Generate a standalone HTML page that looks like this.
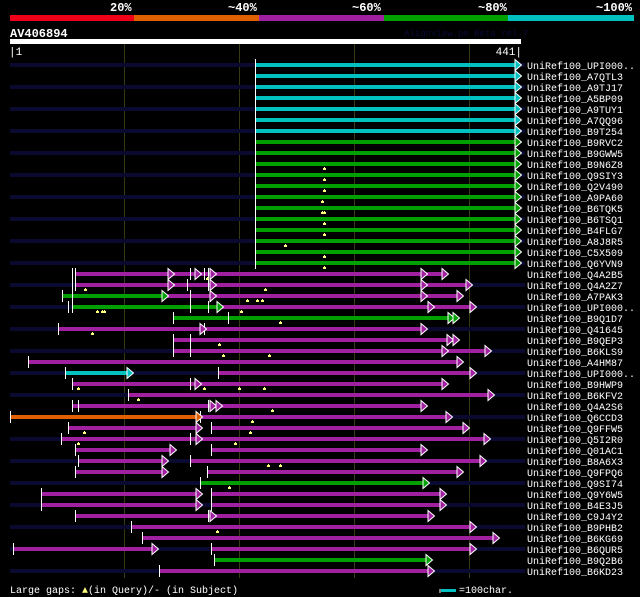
<!DOCTYPE html>
<html><head><meta charset="utf-8"><style>
html,body{margin:0;padding:0;background:#000;width:640px;height:597px;overflow:hidden}
svg{display:block}
text{font-family:"Liberation Mono","DejaVu Sans Mono",monospace}
</style></head><body>
<svg id="s" width="640" height="597" xmlns="http://www.w3.org/2000/svg">
<rect width="640" height="597" fill="#000"/>
<g font-size="12" font-weight="bold" fill="#fff">
<text x="110" y="11">20%</text><text x="228" y="11">~40%</text><text x="352" y="11">~60%</text><text x="478" y="11">~80%</text><text x="596" y="11">~100%</text>
</g>
<rect x="10" y="15" width="125" height="6" fill="#f00018"/>
<rect x="134" y="15" width="125" height="6" fill="#e06000"/>
<rect x="259" y="15" width="125" height="6" fill="#a020a0"/>
<rect x="384" y="15" width="125" height="6" fill="#00a000"/>
<rect x="508" y="15" width="126" height="6" fill="#00c0c0"/>
<text x="10" y="37" font-size="12" font-weight="bold" fill="#fff">AV406894</text>
<text x="404" y="36" font-size="9" fill="#0a0a38">AlignView.pm Beta rel.7</text>
<rect x="10" y="39" width="511" height="5" fill="#fff"/>
<text x="9" y="55" font-size="11" fill="#fff">|1</text>
<text x="522" y="55" font-size="11" fill="#fff" text-anchor="end">441|</text>
<g id="grid" stroke="#3a3a10" stroke-width="1"></g>
<g id="rows"></g>
<text x="10" y="593" font-size="10" fill="#fff">Large gaps: <tspan fill="#ffff80">▲</tspan>(in Query)/- (in Subject)</text>
<line x1="440" y1="589" x2="440" y2="593" stroke="#fff"/>
<rect x="441" y="589" width="15" height="3" fill="#00c0c0"/>
<text x="459" y="593" font-size="10" fill="#fff">=100char.</text>
</svg>
<script>
var NS="http://www.w3.org/2000/svg";
function el(p,t,a){var e=document.createElementNS(NS,t);for(var k in a)e.setAttribute(k,a[k]);p.appendChild(e);return e;}
var g=document.getElementById('grid');
[124,239,354,469].forEach(function(x){el(g,'line',{x1:x+.5,y1:44,x2:x+.5,y2:578});});
var C={c:"#00c0c0",g:"#00a000",m:"#a020a0",o:"#e06000"};
var labels=["UPI000..","A7QTL3","A9TJ17","A5BP09","A9TUY1","A7QQ96","B9T254","B9RVC2","B9GWW5","B9N6Z8","Q9SIY3","Q2V490","A9PA60","B6TQK5","B6TSQ1","B4FLG7","A8J8R5","C5X509","Q6YVN9","Q4A2B5","Q4A2Z7","A7PAK3","UPI000..","B9Q1D7","Q41645","B9QEP3","B6KLS9","A4HM87","UPI000..","B9HWP9","B6KFV2","Q4A2S6","Q6CCD3","Q9FFW5","Q5I2R0","Q01AC1","B8A6X3","Q9FPQ6","Q9SI74","Q9Y6W5","B4E3J5","C9J4Y2","B9PHB2","B6KG69","B6QUR5","B9Q2B6","B6KD23"];
var R=[];
for(var i=0;i<7;i++)R.push({s:[["c",255,515,[515]]],m:[],t:[255]});
for(var i=7;i<19;i++)R.push({s:[["g",255,515,[515]]],m:[],t:[255]});
[9,10,11,12,13,14,15,17,18].forEach(function(i){R[i].m=[324];});R[16].m=[285];R[12].m=[322];R[13].m=[322,324];
R.push({s:[["m",75,442,[168,195,210,421,442]]],m:[207],t:[72,75,190,204,208]});
R.push({s:[["m",75,466,[168,210,421,466]]],m:[85,265],t:[72,75,187,208]});
R.push({s:[["g",62,162,[162]],["m",162,457,[210,421,457]]],m:[247,257,262],t:[62,72,190,210]});
R.push({s:[["g",72,217,[217]],["m",217,470,[428,470]]],m:[97,102,104,241],t:[68,72,190,208]});
R.push({s:[["g",173,453,[448,453]]],m:[280],t:[173,228]});
R.push({s:[["m",58,421,[200,421]]],m:[92],t:[58,204]});
R.push({s:[["m",173,453,[447,453]]],m:[219],t:[173,190]});
R.push({s:[["m",173,485,[442,485]]],m:[223,269],t:[173,190]});
R.push({s:[["m",28,457,[457]]],m:[],t:[28]});
R.push({s:[["c",65,127,[127]],["m",218,470,[470]]],m:[],t:[65,218]});
R.push({s:[["m",72,442,[195,442]]],m:[78,204,239,264],t:[72,190]});
R.push({s:[["m",128,488,[488]]],m:[138],t:[128]});
R.push({s:[["m",72,421,[210,216,421]]],m:[272],t:[72,78,208]});
R.push({s:[["o",10,196,[196]],["m",200,446,[446]]],m:[252],t:[10,200]});
R.push({s:[["m",68,196,[196]],["m",211,463,[463]]],m:[84,250],t:[68,211]});
R.push({s:[["m",61,196,[196]],["m",196,484,[484]]],m:[78,235],t:[61,190]});
R.push({s:[["m",75,170,[170]],["m",211,421,[421]]],m:[],t:[75,211]});
R.push({s:[["m",78,162,[162]],["m",190,480,[480]]],m:[268,280],t:[78,190]});
R.push({s:[["m",75,162,[162]],["m",207,457,[457]]],m:[],t:[75,207]});
R.push({s:[["g",200,423,[423]]],m:[229],t:[200]});
R.push({s:[["m",41,196,[196]],["m",211,440,[440]]],m:[],t:[41,211]});
R.push({s:[["m",41,196,[196]],["m",211,440,[440]]],m:[],t:[41,211]});
R.push({s:[["m",75,210,[210]],["m",210,428,[428]]],m:[],t:[75,208]});
R.push({s:[["m",131,470,[470]]],m:[217],t:[131]});
R.push({s:[["m",142,493,[493]]],m:[],t:[142]});
R.push({s:[["m",13,152,[152]],["m",211,470,[470]]],m:[],t:[13,211]});
R.push({s:[["g",214,426,[426]]],m:[],t:[214]});
R.push({s:[["m",159,428,[428]]],m:[],t:[159]});
var rg=document.getElementById('rows');
R.forEach(function(r,i){
  var y=65+i*11;
  if(i%2==0) el(rg,'rect',{x:10,y:y-2,width:515,height:4,fill:"#0a0a30"});
  r.s.forEach(function(s){el(rg,'rect',{x:s[1],y:y-2,width:s[2]-s[1],height:4,fill:C[s[0]]});});
  r.t.forEach(function(x){el(rg,'rect',{x:x,y:y-6,width:1,height:12,fill:"#fff"});});
  r.s.forEach(function(s){s[3].forEach(function(x){
    el(rg,'polygon',{points:(x)+","+(y-5.5)+" "+(x+6.5)+","+y+" "+(x)+","+(y+5.5),fill:C[s[0]],stroke:"#fff","stroke-width":1});
  });});
  r.m.forEach(function(x){el(rg,'rect',{x:x-1,y:y+4,width:3,height:2,fill:"#ffff80"});el(rg,'rect',{x:x,y:y+3,width:1,height:1,fill:"#ffff80"});});
  var t=el(rg,'text',{x:527,y:y+4,"font-size":"10",fill:"#fff"});t.textContent="UniRef100_"+labels[i];
});
</script>
</body></html>
